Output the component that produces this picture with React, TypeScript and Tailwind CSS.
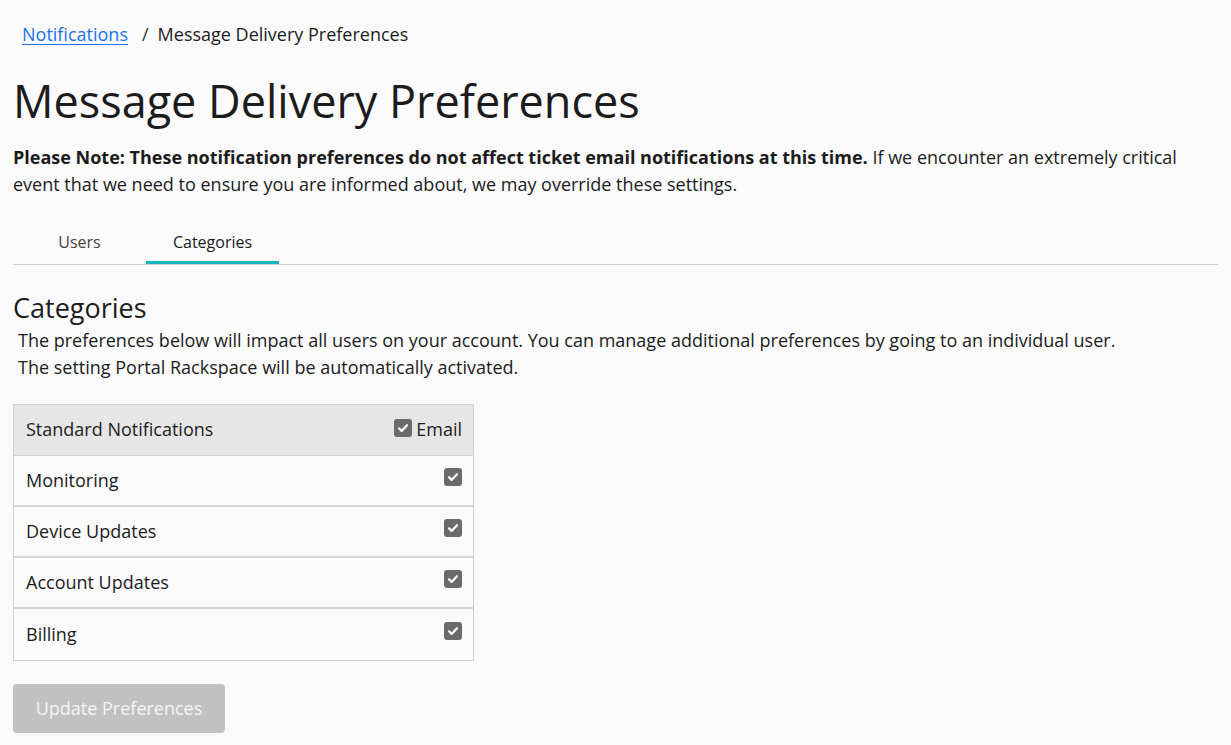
import React from 'react';

const rows = ['Monitoring', 'Device Updates', 'Account Updates', 'Billing'];

const Check: React.FC = () => (
  <span className="inline-flex w-[18px] h-[18px] rounded-[3px] bg-[#6b6b6b] items-center justify-center">
    <svg width="12" height="12" viewBox="0 0 12 12">
      <path d="M2 6.3l2.6 2.6L10 3.2" fill="none" stroke="#fff" strokeWidth="2.2" strokeLinecap="round" strokeLinejoin="round" />
    </svg>
  </span>
);

export default function App() {
  return (
    <div className="min-h-[745px] bg-[#fafafa] text-[#1c1c1c] font-['Open_Sans',sans-serif] px-[13px] pt-[22px]">
      {/* Breadcrumb */}
      <nav className="flex items-center text-[18px] leading-[24px] pl-[9px]">
        <a href="#" className="text-[#1a73e8] underline underline-offset-[3px]">Notifications</a>
        <span className="ml-[14px] mr-[9px] text-[#333]">/</span>
        <span>Message Delivery Preferences</span>
      </nav>

      <h1 className="text-[45px] leading-[60px] mt-[25px]">Message Delivery Preferences</h1>

      <p className="text-[18px] leading-[27px] mt-[13px] pr-[40px]">
        <strong className="font-bold">Please Note: These notification preferences do not affect ticket email notifications at this time.</strong>{' '}
        If we encounter an extremely critical event that we need to ensure you are informed about, we may override these settings.
      </p>

      {/* Tabs */}
      <div className="flex border-b border-[#cfcfcf] mt-[32px] text-[16px]">
        <div className="w-[133px] h-[34px] flex items-start justify-center text-[#444]">Users</div>
        <div className="w-[133px] h-[34px] flex items-start justify-center border-b-[3px] border-[#16b9b9] -mb-[1px]">Categories</div>
      </div>

      <h2 className="text-[27px] leading-[36px] mt-[25px]">Categories</h2>
      <div className="text-[18px] leading-[27px] pl-[5px] mt-[1px]">
        <p>The preferences below will impact all users on your account. You can manage additional preferences by going to an individual user.</p>
        <p>The setting Portal Rackspace will be automatically activated.</p>
      </div>

      {/* Table */}
      <div className="w-[461px] mt-[23px] border border-[#d0d0d0] text-[18px]">
        <div className="flex items-center justify-between h-[51px] bg-[#e6e6e6] pl-[12px] pr-[11px] border-b border-[#d0d0d0]">
          <span className="-mt-[2px]">Standard Notifications</span>
          <span className="flex items-center gap-[4px] -mt-[2px]">
            <span className="-mt-[4px]"><Check /></span>
            <span>Email</span>
          </span>
        </div>
        {rows.map((r, i) => (
          <div
            key={r}
            className={`flex items-center justify-between h-[51px] pl-[12px] pr-[11px] ${i < rows.length - 1 ? 'border-b-2 border-[#d6d6d6]' : ''}`}
          >
            <span>{r}</span>
            <span className="-mt-[9px]"><Check /></span>
          </div>
        ))}
      </div>

      <button className="mt-[23px] w-[212px] h-[49px] rounded-[4px] bg-[#c1c1c1] text-[#f5f5f5] text-[18px]">
        Update Preferences
      </button>
    </div>
  );
}
